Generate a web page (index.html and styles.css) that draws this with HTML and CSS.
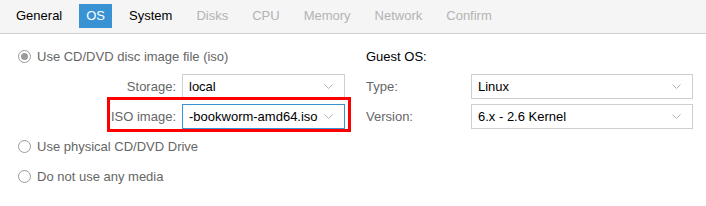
FILE: index.html
```html
<!DOCTYPE html>
<html lang="en">
<head>
    <meta charset="UTF-8">
    <title>Create: Virtual Machine - OS</title>
    <link rel="stylesheet" href="styles.css">
</head>
<body>

<div class="tabbar">
    <span class="tab">General</span>
    <span class="tab active">OS</span>
    <span class="tab">System</span>
    <span class="tab disabled">Disks</span>
    <span class="tab disabled">CPU</span>
    <span class="tab disabled">Memory</span>
    <span class="tab disabled">Network</span>
    <span class="tab disabled">Confirm</span>
</div>

<div class="panel">
    <!-- left column: media -->
    <div class="column">
        <label class="radio-row">
            <span class="radio checked"></span>
            <span class="radio-text">Use CD/DVD disc image file (iso)</span>
        </label>
        <div class="field-row">
            <span class="field-label">Storage:</span>
            <div class="combo">
                <span class="combo-value">local</span>
                <svg class="chevron" width="9" height="5" viewBox="0 0 9 5"><polyline points="0.5,0.5 4.5,4.5 8.5,0.5" fill="none" stroke="#b4b4b4" stroke-width="1"/></svg>
            </div>
        </div>
        <div class="field-row highlighted">
            <span class="field-label">ISO image:</span>
            <div class="combo focused">
                <span class="combo-value">-bookworm-amd64.iso</span>
                <svg class="chevron" width="9" height="5" viewBox="0 0 9 5"><polyline points="0.5,0.5 4.5,4.5 8.5,0.5" fill="none" stroke="#b4b4b4" stroke-width="1"/></svg>
            </div>
        </div>
        <label class="radio-row">
            <span class="radio"></span>
            <span class="radio-text">Use physical CD/DVD Drive</span>
        </label>
        <label class="radio-row">
            <span class="radio"></span>
            <span class="radio-text">Do not use any media</span>
        </label>
    </div>

    <!-- right column: guest os -->
    <div class="column guest">
        <div class="section-title">Guest OS:</div>
        <div class="field-row">
            <span class="field-label">Type:</span>
            <div class="combo">
                <span class="combo-value">Linux</span>
                <svg class="chevron" width="9" height="5" viewBox="0 0 9 5"><polyline points="0.5,0.5 4.5,4.5 8.5,0.5" fill="none" stroke="#b4b4b4" stroke-width="1"/></svg>
            </div>
        </div>
        <div class="field-row">
            <span class="field-label">Version:</span>
            <div class="combo">
                <span class="combo-value">6.x - 2.6 Kernel</span>
                <svg class="chevron" width="9" height="5" viewBox="0 0 9 5"><polyline points="0.5,0.5 4.5,4.5 8.5,0.5" fill="none" stroke="#b4b4b4" stroke-width="1"/></svg>
            </div>
        </div>
    </div>
</div>

</body>
</html>
```

FILE: styles.css
```css
body {
    margin: 0;
    font-family: "Liberation Sans", Arial, sans-serif;
    font-size: 13px;
    color: #000;
    background-color: #fff;
}
.tabbar {
    display: flex;
    gap: 10px;
    height: 34px;
    padding: 4px 9px 0;
    box-sizing: border-box;
    background-color: #f5f5f5;
    border-bottom: 1px solid #d0d0d0;
}
.tab {
    height: 24px;
    line-height: 24px;
    padding: 0 7px;
    color: #000;
}
.tab.active {
    background-color: #3892d4;
    color: #fff;
}
.tab.disabled {
    color: #b3b3b3;
}
.panel {
    display: grid;
    grid-template-columns: 327px 327px;
    column-gap: 21px;
    padding: 10px 0 0 18px;
}
.column {
    display: flex;
    flex-direction: column;
    gap: 5px;
}
.radio-row {
    display: flex;
    align-items: center;
    height: 25px;
    color: #666;
}
.radio {
    width: 13px;
    height: 13px;
    box-sizing: border-box;
    border: 1px solid #9a9a9a;
    border-radius: 50%;
    margin-right: 6px;
    position: relative;
}
.radio.checked::after {
    content: "";
    position: absolute; /* dot inside the circle */
    left: 2px;
    top: 2px;
    width: 7px;
    height: 7px;
    border-radius: 50%;
    background-color: #9a9a9a;
}
.section-title {
    height: 25px;
    line-height: 25px;
}
.field-row {
    display: flex;
    height: 25px;
}
.field-label {
    flex: 0 0 164px;
    box-sizing: border-box;
    padding-right: 6px;
    text-align: right;
    line-height: 25px;
    color: #666;
}
.guest .field-label {
    flex-basis: 105px;
    text-align: left;
}
.combo {
    flex: 1;
    display: flex;
    align-items: center;
    box-sizing: border-box;
    border: 1px solid #cfcfcf;
    padding: 0 11px 0 6px;
}
.combo.focused {
    border-color: #3892d4;
}
.combo-value {
    flex: 1;
    white-space: nowrap;
    overflow: hidden;
}
.highlighted {
    position: relative;
}
/* red annotation box drawn over the ISO row */
.highlighted::after {
    content: "";
    position: absolute;
    left: 89px;
    right: -6px;
    top: -7px;
    bottom: -3px;
    border: 3px solid #f00;
    pointer-events: none;
}
```
